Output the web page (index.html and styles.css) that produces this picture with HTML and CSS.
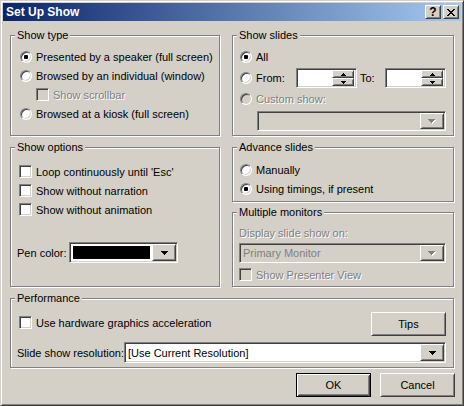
FILE: index.html
```html
<!DOCTYPE html>
<html>
<head>
<meta charset="utf-8">
<title>Set Up Show</title>
<link rel="stylesheet" href="styles.css">
</head>
<body>
<div class="window">
  <div class="titlebar">
    <span class="title">Set Up Show</span>
    <div class="cap-btns">
      <span class="cap-btn raised">?</span>
      <span class="cap-btn raised"><svg width="8" height="7" viewBox="0 0 8 7" shape-rendering="crispEdges"><path d="M0 0h2v1H0zM6 0h2v1H6zM1 1h2v1H1zM5 1h2v1H5zM2 2h4v1H2zM3 3h2v1H3zM2 4h4v1H2zM1 5h2v1H1zM5 5h2v1H5zM0 6h2v1H0zM6 6h2v1H6z"/></svg></span>
    </div>
  </div>
  <div class="content">
    <div class="top-grid">
      <div class="group">
        <span class="legend">Show type</span>
        <div class="gbody gl pt5">
          <div class="opt"><span class="radio on"></span>Presented by a speaker (full screen)</div>
          <div class="opt"><span class="radio"></span>Browsed by an individual (window)</div>
          <div class="opt indent dis-text"><span class="check dis"></span>Show scrollbar</div>
          <div class="opt"><span class="radio"></span>Browsed at a kiosk (full screen)</div>
        </div>
      </div>
      <div class="group">
        <span class="legend">Show slides</span>
        <div class="gbody gr pt5">
          <div class="opt"><span class="radio on"></span>All</div>
          <div class="opt from-row">
            <span class="radio"></span><span class="lbl-from">From:</span>
            <div class="field spin-field">
              <div class="spin">
                <span class="spin-btn raised"><svg width="5" height="3" viewBox="0 0 5 3" shape-rendering="crispEdges"><path d="M2 0h1v1H2zM1 1h3v1H1zM0 2h5v1H0z"/></svg></span>
                <span class="spin-btn raised"><svg width="5" height="3" viewBox="0 0 5 3" shape-rendering="crispEdges"><path d="M0 0h5v1H0zM1 1h3v1H1zM2 2h1v1H2z"/></svg></span>
              </div>
            </div>
            <span class="lbl-to">To:</span>
            <div class="field spin-field">
              <div class="spin">
                <span class="spin-btn raised"><svg width="5" height="3" viewBox="0 0 5 3" shape-rendering="crispEdges"><path d="M2 0h1v1H2zM1 1h3v1H1zM0 2h5v1H0z"/></svg></span>
                <span class="spin-btn raised"><svg width="5" height="3" viewBox="0 0 5 3" shape-rendering="crispEdges"><path d="M0 0h5v1H0zM1 1h3v1H1zM2 2h1v1H2z"/></svg></span>
              </div>
            </div>
          </div>
          <div class="opt custom-row dis-text"><span class="radio dis"></span>Custom show:</div>
          <div class="field combo dis custom-combo">
            <span class="combo-text"></span>
            <span class="combo-btn raised"><svg width="8" height="5" viewBox="0 0 8 5" shape-rendering="crispEdges"><path fill="#fff" d="M1 1h7v1H1zM2 2h5v1H2zM3 3h3v1H3zM4 4h1v1H4z"/><path fill="#808080" d="M0 0h7v1H0zM1 1h5v1H1zM2 2h3v1H2zM3 3h1v1H3z"/></svg></span>
          </div>
        </div>
      </div>
      <div class="group">
        <span class="legend">Show options</span>
        <div class="gbody gl pt8">
          <div class="opt"><span class="check"></span>Loop continuously until 'Esc'</div>
          <div class="opt"><span class="check"></span>Show without narration</div>
          <div class="opt"><span class="check"></span>Show without animation</div>
          <div class="pen-row">
            <span class="lbl-pen">Pen color:</span>
            <div class="field combo pen-combo">
              <span class="swatch"></span>
              <span class="combo-btn raised"><svg width="7" height="4" viewBox="0 0 7 4" shape-rendering="crispEdges"><path d="M0 0h7v1H0zM1 1h5v1H1zM2 2h3v1H2zM3 3h1v1H3z"/></svg></span>
            </div>
          </div>
        </div>
      </div>
      <div class="right-col">
        <div class="group advance">
          <span class="legend">Advance slides</span>
          <div class="gbody gr pt6">
            <div class="opt"><span class="radio"></span>Manually</div>
            <div class="opt"><span class="radio on"></span>Using timings, if present</div>
          </div>
        </div>
        <div class="group monitors">
          <span class="legend">Multiple monitors</span>
          <div class="gbody gr pt5">
            <div class="txt-row dis-text">Display slide show on:</div>
            <div class="field combo dis mon-combo">
              <span class="combo-text gray">Primary Monitor</span>
              <span class="combo-btn raised"><svg width="8" height="5" viewBox="0 0 8 5" shape-rendering="crispEdges"><path fill="#fff" d="M1 1h7v1H1zM2 2h5v1H2zM3 3h3v1H3zM4 4h1v1H4z"/><path fill="#808080" d="M0 0h7v1H0zM1 1h5v1H1zM2 2h3v1H2zM3 3h1v1H3z"/></svg></span>
            </div>
            <div class="opt presenter dis-text"><span class="check dis"></span>Show Presenter View</div>
          </div>
        </div>
      </div>
    </div>
    <div class="group perf">
      <span class="legend">Performance</span>
      <div class="gbody gl pr7 pt7">
        <div class="perf-row1">
          <div class="opt hw"><span class="check"></span>Use hardware graphics acceleration</div>
          <span class="btn raised tips">Tips</span>
        </div>
        <div class="perf-row2">
          <span class="lbl-res">Slide show resolution:</span>
          <div class="field combo res-combo">
            <span class="combo-text">[Use Current Resolution]</span>
            <span class="combo-btn raised"><svg width="7" height="4" viewBox="0 0 7 4" shape-rendering="crispEdges"><path d="M0 0h7v1H0zM1 1h5v1H1zM2 2h3v1H2zM3 3h1v1H3z"/></svg></span>
          </div>
        </div>
      </div>
    </div>
    <div class="dlg-btns">
      <span class="btn default">OK</span>
      <span class="btn raised">Cancel</span>
    </div>
  </div>
</div>
</body>
</html>
```

FILE: styles.css
```css
* { box-sizing: border-box; }
html, body { margin: 0; padding: 0; }
body {
  background: #d4d0c8;
  font-family: "Liberation Sans", Arial, sans-serif;
  font-size: 11px;
  color: #000;
}
svg { display: block; }

.window {
  width: 464px;
  height: 406px;
  background: #d4d0c8;
  border: 1px solid;
  border-color: #d4d0c8 #404040 #404040 #d4d0c8;
  box-shadow: inset 1px 1px #fff, inset -1px -1px #808080;
  padding: 2px;
  display: flex;
  flex-direction: column;
}

.titlebar {
  flex: none;
  height: 18px;
  display: flex;
  align-items: center;
  padding: 0 2px 0 3px;
  background: linear-gradient(to right, #0a246a, #a6caf0);
}
.title {
  flex: 1;
  color: #fff;
  font-weight: bold;
  font-size: 12px;
  line-height: 18px;
}
.cap-btns { display: flex; gap: 2px; }
.cap-btn {
  width: 16px;
  height: 14px;
  display: flex;
  align-items: center;
  justify-content: center;
  font-weight: bold;
  font-size: 12px;
  line-height: 12px;
}

.raised {
  background: #d4d0c8;
  border: 1px solid;
  border-color: #fff #404040 #404040 #fff;
  box-shadow: inset 1px 1px #d4d0c8, inset -1px -1px #808080;
}
.field {
  border: 1px solid;
  border-color: #808080 #fff #fff #808080;
  box-shadow: inset 1px 1px #404040, inset -1px -1px #d4d0c8;
  background: #fff;
}

.content {
  padding: 14px 7px 0 7px;
  display: flex;
  flex-direction: column;
}
.top-grid {
  display: grid;
  grid-template-columns: 210px 222px;
  grid-template-rows: 101px 140px;
  column-gap: 12px;
  row-gap: 11px;
}
.right-col { display: flex; flex-direction: column; gap: 10px; }
.advance { height: 55px; flex: none; }
.monitors { flex: 1; }

.group {
  border: 1px solid #808080;
  box-shadow: inset 1px 1px #fff, 1px 1px #fff;
  display: flex;
  flex-direction: column;
}
.legend {
  align-self: flex-start;
  margin: -7px 0 0 4px;
  padding: 0 2px;
  height: 13px;
  line-height: 13px;
  background: #d4d0c8;
  white-space: nowrap;
}
.gbody { display: flex; flex-direction: column; }
.gl { padding-left: 8px; }
.gr { padding-left: 6px; padding-right: 7px; }
.pr7 { padding-right: 7px; }
.pt5 { padding-top: 5px; }
.pt6 { padding-top: 6px; }
.pt7 { padding-top: 7px; }
.pt8 { padding-top: 8px; }

.opt {
  display: flex;
  align-items: center;
  height: 19px;
  white-space: nowrap;
}
.indent { margin-left: 17px; }
.radio {
  flex: none;
  width: 12px;
  height: 12px;
  margin: 0 4px 0 1px;
  border-radius: 50%;
  border: 1px solid;
  border-color: #808080 #fff #fff #808080;
  box-shadow: inset 1px 1px #404040, inset -1px -1px #d4d0c8;
  background: #fff;
  display: flex;
  align-items: center;
  justify-content: center;
}
.radio.on::after {
  content: "";
  width: 4px;
  height: 4px;
  border-radius: 1px;
  background: #000;
}
.check {
  flex: none;
  width: 13px;
  height: 13px;
  margin-right: 4px;
  border: 1px solid;
  border-color: #808080 #fff #fff #808080;
  box-shadow: inset 1px 1px #404040, inset -1px -1px #d4d0c8;
  background: #fff;
}
.radio.dis, .check.dis { background: #d4d0c8; }
.dis-text { color: #808080; text-shadow: 1px 1px 0 #fff; }
.dis-text .radio, .dis-text .check { text-shadow: none; }

.from-row { height: 20px; margin-top: 2px; }
.lbl-from { width: 40px; flex: none; }
.lbl-to { width: 25px; margin-left: 3px; flex: none; }
.spin-field {
  flex: none;
  width: 61px;
  height: 20px;
  display: flex;
  justify-content: flex-end;
  padding: 1px 2px 1px 1px;
}
.spin { width: 22px; display: flex; flex-direction: column; }
.spin-btn {
  flex: 1;
  display: flex;
  align-items: center;
  justify-content: center;
}
.custom-row { margin-top: 1px; }

.combo {
  display: flex;
  padding: 1px;
  flex: none;
}
.combo.dis { background: #d4d0c8; }
.combo-text {
  flex: 1;
  padding-left: 2px;
  display: flex;
  align-items: center;
  white-space: nowrap;
  overflow: hidden;
}
.combo-text.gray { color: #808080; }
.combo-btn {
  flex: none;
  width: 24px;
  display: flex;
  align-items: center;
  justify-content: center;
}
.custom-combo { width: 189px; height: 20px; margin: 3px 0 0 18px; }

.pen-row {
  display: flex;
  align-items: center;
  height: 21px;
  margin: 23px 0 0 -2px;
}
.lbl-pen { width: 52px; flex: none; }
.pen-combo { width: 109px; height: 21px; }
.swatch { flex: 1; margin: 2px; background: #000; }

.txt-row { height: 18px; display: flex; align-items: center; white-space: nowrap; }
.mon-combo { width: 207px; height: 20px; margin-top: 1px; }
.presenter { margin-top: 2px; }

.perf { height: 70px; margin-top: 11px; }
.perf-row1 { display: flex; align-items: center; height: 23px; }
.hw { margin-top: -2px; }
.tips { margin-left: auto; width: 75px; height: 23px; }
.perf-row2 {
  display: flex;
  align-items: center;
  height: 21px;
  margin: 7px 0 0 -2px;
}
.lbl-res { width: 107px; flex: none; white-space: nowrap; }
.res-combo { width: 322px; height: 21px; }

.btn {
  display: flex;
  align-items: center;
  justify-content: center;
  width: 75px;
  height: 24px;
}
.btn.default {
  background: #d4d0c8;
  border: 1px solid #000;
  box-shadow: inset 1px 1px #fff, inset -1px -1px #404040, inset 2px 2px #d4d0c8, inset -2px -2px #808080;
}
.dlg-btns {
  display: flex;
  justify-content: flex-end;
  gap: 9px;
  margin: 5px -1px 0 0;
}
```
